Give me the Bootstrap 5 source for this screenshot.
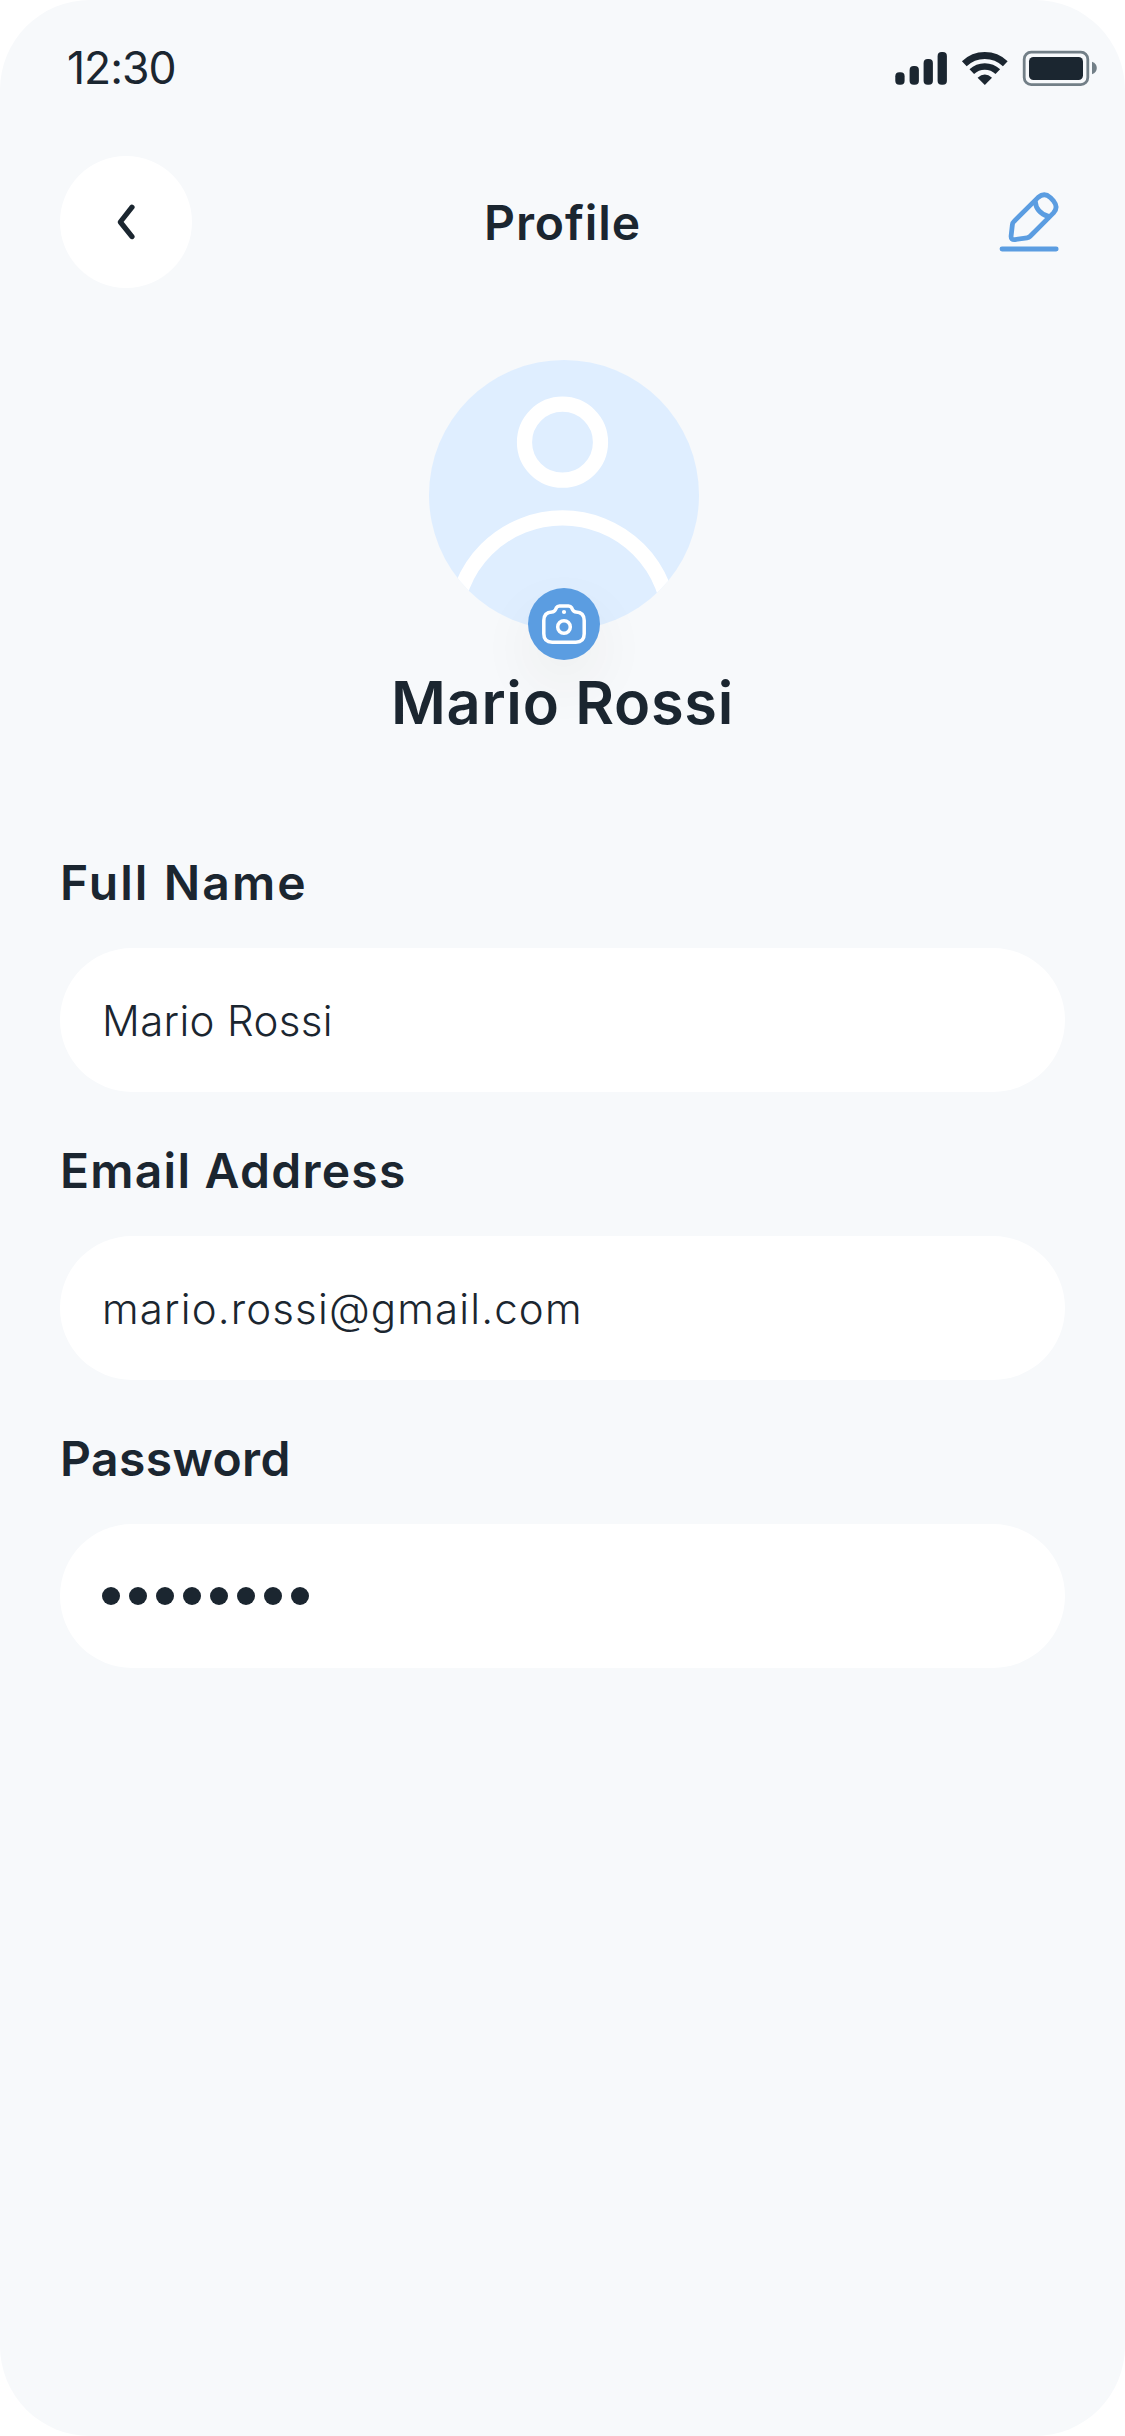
<!DOCTYPE html>
<html lang="en">
<head>
<meta charset="utf-8">
<meta name="viewport" content="width=device-width, initial-scale=1">
<title>Profile</title>
<link href="https://cdn.jsdelivr.net/npm/bootstrap@5.3.0/dist/css/bootstrap.min.css" rel="stylesheet">
<style>
:root{--ink:#1b2630;--accent:#5b9de1;--canvas:#f7f9fb}
body{background:#fff;color:var(--ink);font-family:Inter,"Open Sans",sans-serif;line-height:1}
.screen{height:2436px;background:var(--canvas);border-radius:90px}
.status-bar{height:156px;padding:36px 28px 0 67px}
.clock{font-size:44.5px;line-height:65px;letter-spacing:-1px}
.top-bar{height:132px;padding:0 60px}
.side{width:132px;height:132px}
.page-title{font-size:48px;font-weight:600;letter-spacing:.9px;padding-top:2px}
.avatar-area{margin-top:72px;padding-left:3px}
.avatar{width:270px;height:270px}
.badge-camera{width:72px;height:72px;background:var(--accent);bottom:-30px;left:99px;box-shadow:0 24px 60px rgba(70,55,30,.06)}
.person{font-size:59.5px;font-weight:600;line-height:72px;margin-top:36px;letter-spacing:.7px}
.fields{padding:0 60px;margin-top:111px}
.field-label{font-size:48px;font-weight:600;line-height:68px;height:99px}
.field-box,.field-box:focus{height:144px;background:#fff;color:var(--ink);font-size:42px;font-weight:300;padding:0 42px;margin-bottom:45px}
.label-name{letter-spacing:2.1px}
.label-email{letter-spacing:1.25px}
.label-password{letter-spacing:.4px}
.box-name,.box-name:focus{letter-spacing:.35px}
.box-email,.box-email:focus{letter-spacing:1.15px}
.dots{gap:9px}
.dot{width:18px;height:18px;background:var(--ink)}
</style>
<script src="https://cdn.jsdelivr.net/npm/bootstrap@5.3.0/dist/js/bootstrap.bundle.min.js"></script>
</head>
<body>
<main class="screen d-flex flex-column overflow-hidden">
  <header class="status-bar d-flex justify-content-between align-items-start">
    <span class="clock">12:30</span>
    <svg width="206" height="64" viewBox="16 6 206 64" aria-hidden="true">
      <g fill="#1b2630">
        <rect x="20.3" y="42.2" width="9.3" height="12.6" rx="4"/>
        <rect x="34.6" y="36" width="9.3" height="18.8" rx="4"/>
        <rect x="48.6" y="29" width="9.3" height="25.8" rx="4"/>
        <rect x="62.6" y="22" width="9.3" height="32.8" rx="4"/>
        <path d="M109.8 55 102.6 47.8Q109.8 41 117 47.8Z"/>
        <rect x="154" y="27" width="54" height="23" rx="4.5"/>
      </g>
      <g fill="none" stroke="#1b2630">
        <path d="M89.3 33.8A29.5 29.5 0 0 1 130.3 33.8" stroke-width="6.8"/>
        <path d="M96.8 41.7A18.7 18.7 0 0 1 122.8 41.7" stroke-width="6.6"/>
      </g>
      <rect x="149.2" y="22.2" width="63.6" height="32.4" rx="7" fill="none" stroke="#727f87" stroke-width="2.8"/>
      <path d="M217 31.8Q221.8 33.6 221.8 38T217 44.3Z" fill="#727f87"/>
    </svg>
  </header>

  <nav class="top-bar d-flex justify-content-between align-items-center">
    <a href="#" class="side rounded-circle bg-white d-flex" aria-label="Back">
      <svg width="132" height="132" viewBox="60 156 132 132"><path d="M132 207.2 120.3 222 132 236.6" fill="none" stroke="#1b2630" stroke-width="5.2" stroke-linecap="round" stroke-linejoin="round"/></svg>
    </a>
    <h1 class="page-title mb-0">Profile</h1>
    <a href="#" class="side d-flex justify-content-end align-items-center" aria-label="Edit profile">
      <svg width="90" height="132" viewBox="-5 -14 90 132"><g fill="none" stroke="#5b9de1" stroke-width="4.8" stroke-linecap="round" stroke-linejoin="round">
        <path d="M34.2 51.2 58.2 27.4Q64.3 22 70.2 27.4L73.7 31.2Q78.6 37.2 73.5 42.9L50.2 66.2Q48.9 67.5 47 67.8L34.9 69.6Q30.9 70 31.1 66L32.4 54.6Q32.6 52.6 34.2 51.2Z"/>
        <path d="M55.2 31.2Q56.2 42.8 68.5 46.4"/><path d="M22 79H76.2"/></g></svg>
    </a>
  </nav>

  <section class="avatar-area d-flex justify-content-center">
    <div class="avatar position-relative">
      <svg width="270" height="270" viewBox="429 360 270 270" aria-label="Profile picture">
        <clipPath id="disc"><circle cx="564" cy="495" r="135"/></clipPath>
        <circle cx="564" cy="495" r="135" fill="#dfeeff"/>
        <g clip-path="url(#disc)" fill="none" stroke="#fff" stroke-width="15.2"><circle cx="562.5" cy="442.2" r="38"/><circle cx="562.5" cy="625.5" r="107.6"/></g>
      </svg>
      <button type="button" class="badge-camera position-absolute rounded-circle border-0 p-0" aria-label="Change picture">
        <svg class="d-block" width="72" height="72" viewBox="528 588 72 72"><g fill="none" stroke="#fff" stroke-width="3.5" stroke-linejoin="round">
          <path d="M552 611.9Q554.4 611.9 555.4 609.8L556.4 607.7Q557.4 605.9 559.5 605.9H568.5Q570.6 605.9 571.6 607.7L572.6 609.8Q573.6 611.9 576 611.9Q584.2 612.2 584.2 620.5V633.8Q584.2 642.2 575.8 642.2H552.2Q543.8 642.2 543.8 633.8V620.5Q543.8 612.2 552 611.9Z"/>
          <circle cx="564" cy="627" r="6.3"/></g><circle cx="564" cy="612" r="2.1" fill="#fff"/></svg>
      </button>
    </div>
  </section>
  <h2 class="person text-center mb-0">Mario Rossi</h2>

  <form class="fields">
    <label class="field-label label-name d-block" for="name">Full Name</label>
    <input id="name" class="field-box box-name form-control rounded-pill border-0 shadow-none" type="text" value="Mario Rossi">
    <label class="field-label label-email d-block" for="email">Email Address</label>
    <input id="email" class="field-box box-email form-control rounded-pill border-0 shadow-none" type="email" value="mario.rossi@gmail.com">
    <div class="field-label label-password">Password</div>
    <div class="field-box rounded-pill d-flex align-items-center" role="img" aria-label="Hidden password">
      <div class="dots d-flex"><i class="dot rounded-circle"></i><i class="dot rounded-circle"></i><i class="dot rounded-circle"></i><i class="dot rounded-circle"></i><i class="dot rounded-circle"></i><i class="dot rounded-circle"></i><i class="dot rounded-circle"></i><i class="dot rounded-circle"></i></div>
    </div>
  </form>
</main>
</body>
</html>
